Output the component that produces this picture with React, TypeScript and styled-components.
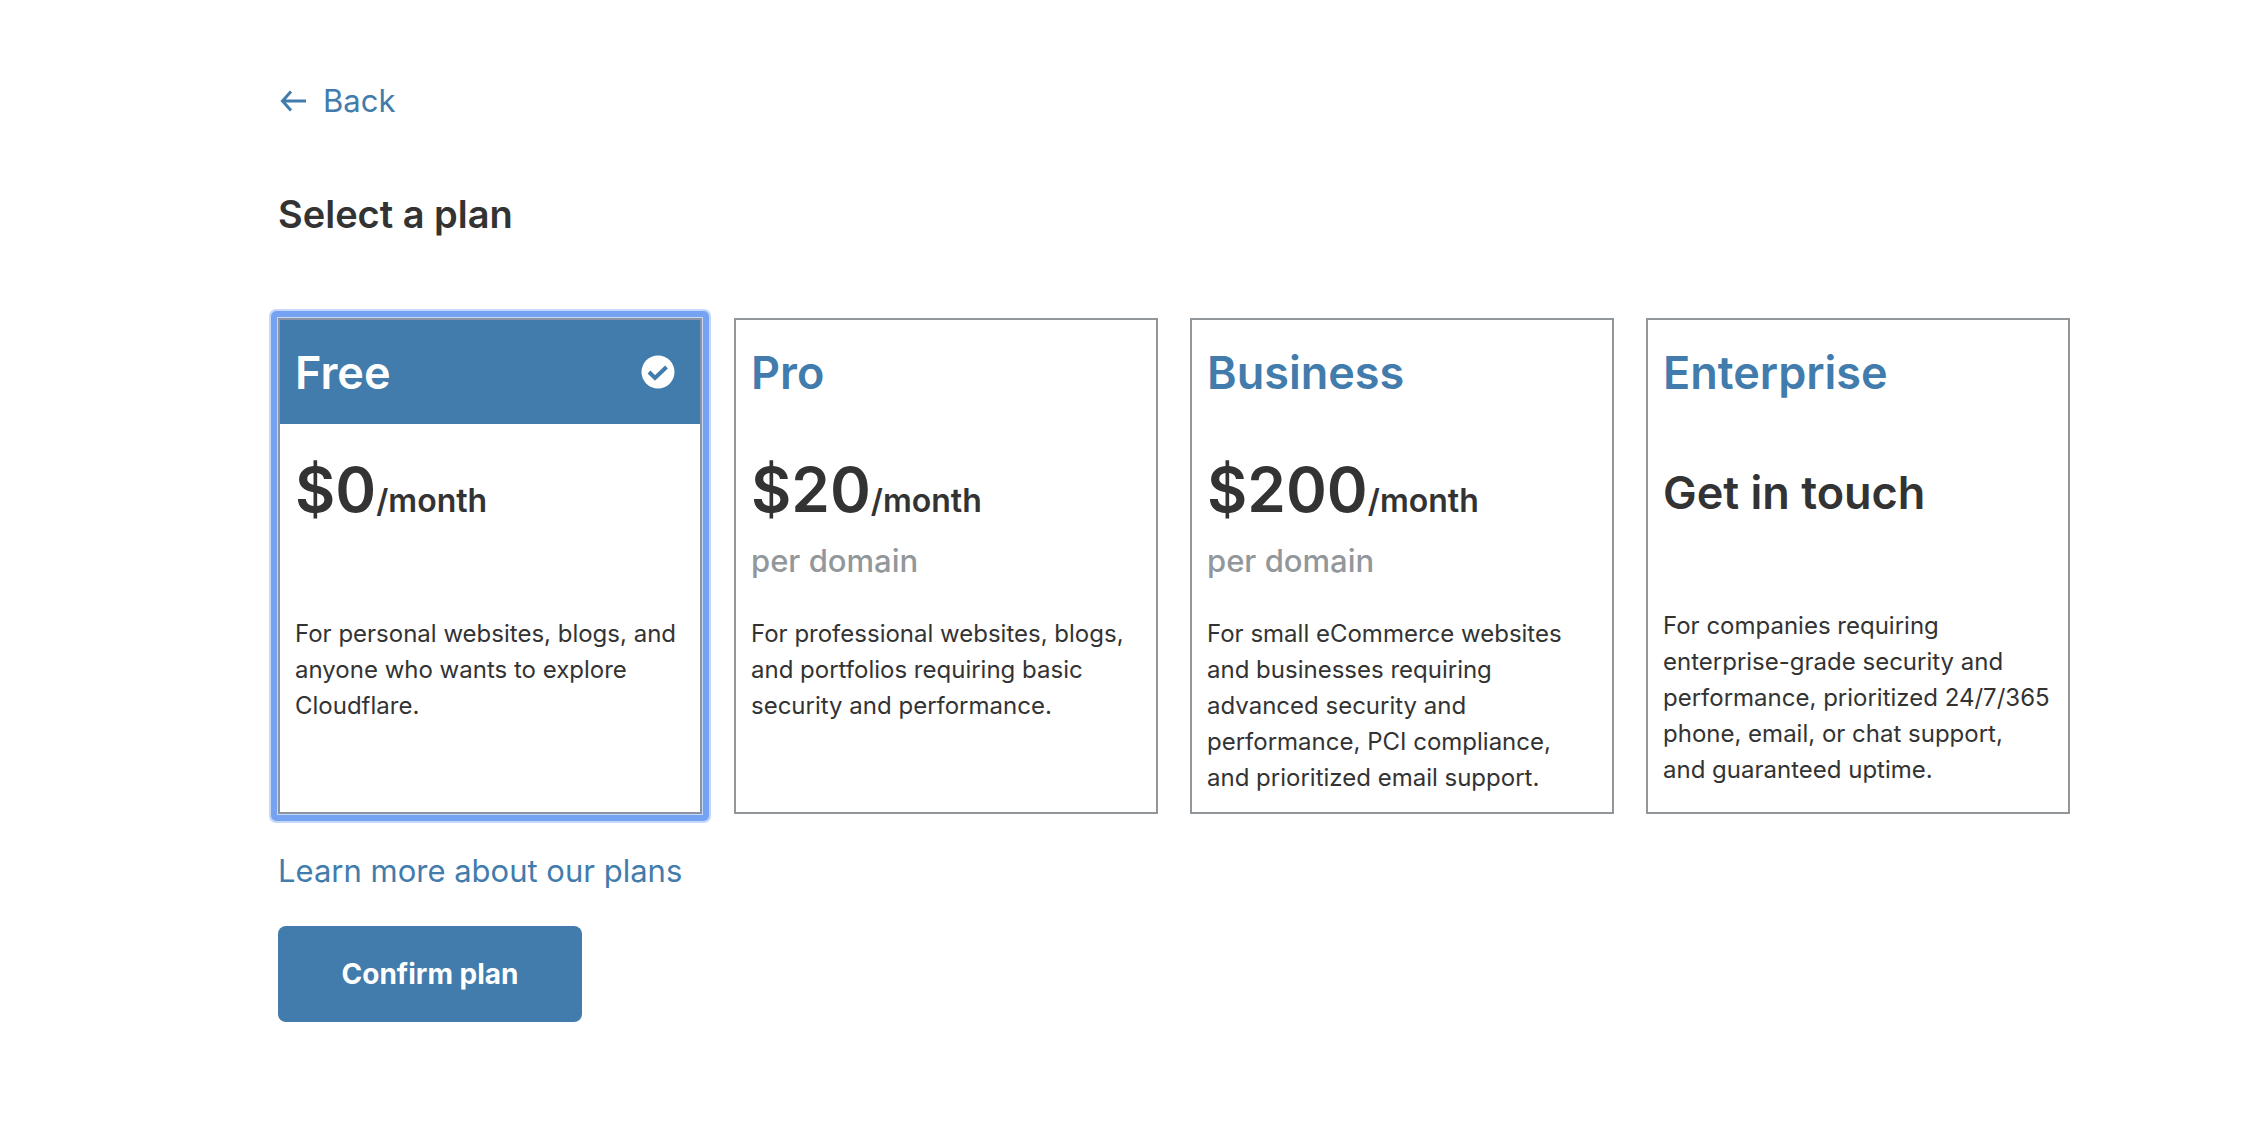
import React, { useState } from "react";
import styled, { createGlobalStyle } from "styled-components";

const blue = "#427cac";
const ink = "#333333";
const grey = "#92979b";

const GlobalStyle = createGlobalStyle`
  *, *::before, *::after { box-sizing: border-box; }
  body {
    margin: 0;
    background: #ffffff;
    color: ${ink};
    font-family: Inter, "Liberation Sans", sans-serif;
  }
`;

const Page = styled.main`
  display: flex;
  flex-direction: column;
  align-items: flex-start;
  padding: 77px 178px 118px 278px;
`;

const TextLink = styled.a`
  display: inline-flex;
  align-items: center;
  gap: 13px;
  color: ${blue};
  font-size: 31px;
  line-height: 48px;
  text-decoration: none;
`;

const Title = styled.h1`
  margin: 65px 0 80px;
  font-size: 38px;
  font-weight: 600;
  line-height: 48px;
`;

const PlanGrid = styled.fieldset`
  display: grid;
  grid-template-columns: repeat(4, minmax(0, 1fr));
  gap: 32px;
  width: 100%;
  min-width: 0;
  margin: 0 0 33px;
  padding: 0;
  border: 0;
`;

const PlanCard = styled.label<{ $selected: boolean }>`
  position: relative;
  display: flex;
  flex-direction: column;
  border: 2px solid ${(p) => (p.$selected ? "#8a94a4" : grey)};
  cursor: pointer;

  &::after {
    content: "";
    display: ${(p) => (p.$selected ? "block" : "none")};
    position: absolute;
    inset: -9px;
    border: 6px solid #76a2f2;
    border-radius: 5px;
    box-shadow: 0 0 0 2px #c5d8fa, inset 0 0 0 1px #c5d8fa;
    pointer-events: none;
  }
`;

const PlanRadio = styled.input`
  position: absolute;
  width: 1px;
  height: 1px;
  margin: 0;
  opacity: 0;
`;

const PlanHeader = styled.span<{ $selected: boolean }>`
  display: flex;
  align-items: center;
  justify-content: space-between;
  height: 104px;
  padding: 0 25px 0 15px;
  background: ${(p) => (p.$selected ? blue : "transparent")};
  color: ${(p) => (p.$selected ? "#ffffff" : blue)};
  font-size: 45px;
  font-weight: 600;
`;

const Pricing = styled.span<{ $contact: boolean }>`
  display: flex;
  flex-direction: column;
  height: ${(p) => (p.$contact ? 184 : 192)}px;
  padding: 32px 15px 0;
`;

const Price = styled.span`
  font-size: 62px;
  font-weight: 600;
  line-height: 68px;
`;

const Period = styled.span`
  font-size: 32px;
`;

const Contact = styled.span`
  font-size: 45px;
  font-weight: 600;
  line-height: 74px;
`;

const PriceNote = styled.span`
  margin-top: 6px;
  color: ${grey};
  font-size: 31px;
  font-weight: 500;
  line-height: 40px;
`;

const Description = styled.span`
  padding: 0 15px 16px;
  font-size: 24px;
  line-height: 36px;
`;

const ConfirmButton = styled.button`
  margin-top: 31px;
  width: 304px;
  height: 96px;
  border: 0;
  border-radius: 8px;
  background: ${blue};
  color: #ffffff;
  font: 700 28px Inter, "Liberation Sans", sans-serif;
  cursor: pointer;
`;

const ArrowIcon = () => (
  <svg width="32" height="32" viewBox="0 0 32 32" fill="none" stroke="currentColor" strokeWidth="3" aria-hidden="true">
    <path d="M28 16H5M13 6.5L4.5 16l8.500 9.500" />
  </svg>
);

const CheckIcon = () => (
  <svg width="34" height="34" viewBox="0 0 34 34" aria-hidden="true">
    <circle cx="17" cy="17" r="16.500" fill="#ffffff" />
    <path d="M8 17l6 6L25.500 12" fill="none" stroke={blue} strokeWidth="4" />
  </svg>
);

type Plan = {
  id: string;
  name: string;
  price?: string;
  note?: string;
  description: string;
};

const plans: Plan[] = [
  {
    id: "free",
    name: "Free",
    price: "$0",
    description: "For personal websites, blogs, and anyone who wants to explore Cloudflare.",
  },
  {
    id: "pro",
    name: "Pro",
    price: "$20",
    note: "per domain",
    description: "For professional websites, blogs, and portfolios requiring basic security and performance.",
  },
  {
    id: "business",
    name: "Business",
    price: "$200",
    note: "per domain",
    description:
      "For small eCommerce websites and businesses requiring advanced security and performance, PCI compliance, and prioritized email support.",
  },
  {
    id: "enterprise",
    name: "Enterprise",
    description:
      "For companies requiring enterprise-grade security and performance, prioritized 24/7/365 phone, email, or chat support, and\u00a0guaranteed uptime.",
  },
];

export default function App() {
  const [selectedId, setSelectedId] = useState("free");

  return (
    <>
      <GlobalStyle />
      <Page>
        <TextLink href="#back">
          <ArrowIcon />
          Back
        </TextLink>
        <Title id="plan-title">Select a plan</Title>
        <PlanGrid aria-labelledby="plan-title">
          {plans.map((plan) => {
            const selected = plan.id === selectedId;
            return (
              <PlanCard key={plan.id} $selected={selected} htmlFor={plan.id}>
                <PlanRadio
                  type="radio"
                  name="plan"
                  id={plan.id}
                  checked={selected}
                  onChange={() => setSelectedId(plan.id)}
                />
                <PlanHeader $selected={selected}>
                  {plan.name}
                  {selected && <CheckIcon />}
                </PlanHeader>
                <Pricing $contact={!plan.price}>
                  {plan.price ? (
                    <Price>
                      {plan.price}
                      <Period>/month</Period>
                    </Price>
                  ) : (
                    <Contact>Get in touch</Contact>
                  )}
                  {plan.note && <PriceNote>{plan.note}</PriceNote>}
                </Pricing>
                <Description>{plan.description}</Description>
              </PlanCard>
            );
          })}
        </PlanGrid>
        <TextLink href="#plans">Learn more about our plans</TextLink>
        <ConfirmButton type="button">Confirm plan</ConfirmButton>
      </Page>
    </>
  );
}
